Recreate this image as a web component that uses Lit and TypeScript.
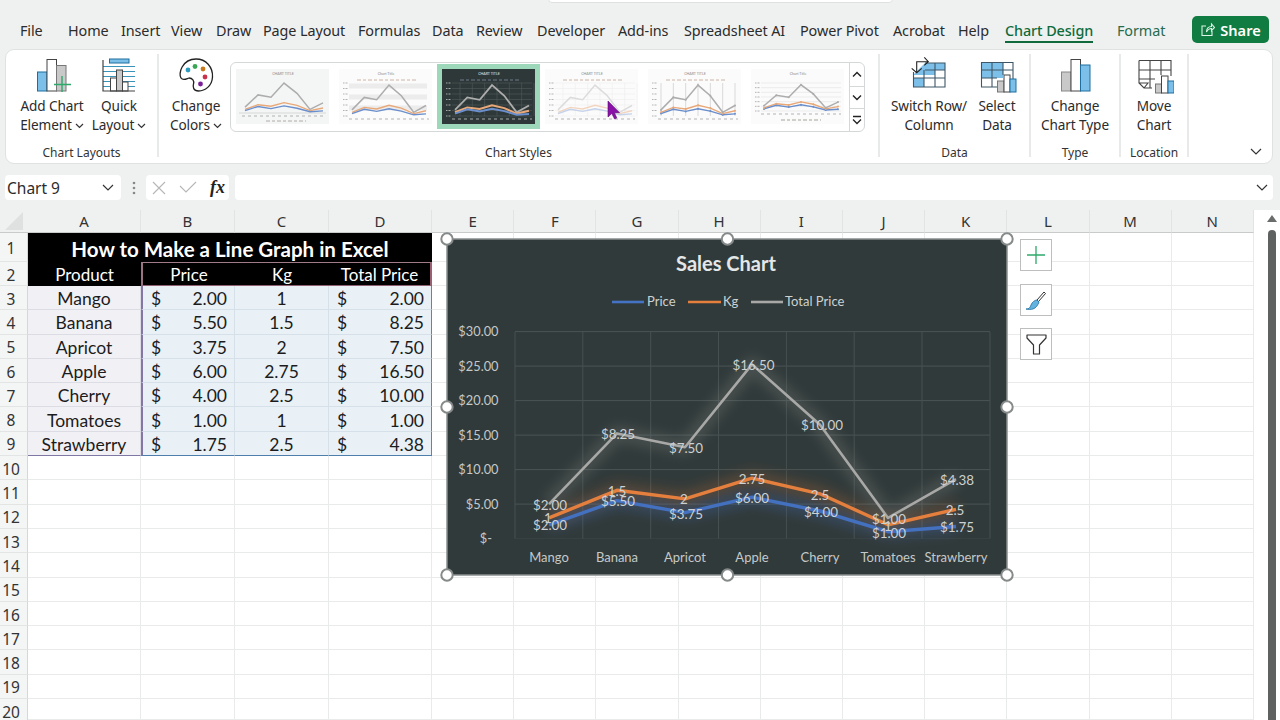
import { LitElement, html, css, svg } from "lit";
import { customElement } from "lit/decorators.js";

const TABS: [string, number][] = [
  ["File", 20], ["Home", 68], ["Insert", 121], ["View", 171], ["Draw", 216], ["Page Layout", 263],
  ["Formulas", 358], ["Data", 432], ["Review", 476], ["Developer", 537], ["Add-ins", 618],
  ["Spreadsheet AI", 684], ["Power Pivot", 800], ["Acrobat", 893], ["Help", 958],
  ["Chart Design", 1005], ["Format", 1117],
];
const COLS = ["A", "B", "C", "D", "E", "F", "G", "H", "I", "J", "K", "L", "M", "N"];
const DATA: [string, string, string, string][] = [
  ["Mango", "2.00", "1", "2.00"], ["Banana", "5.50", "1.5", "8.25"], ["Apricot", "3.75", "2", "7.50"],
  ["Apple", "6.00", "2.75", "16.50"], ["Cherry", "4.00", "2.5", "10.00"], ["Tomatoes", "1.00", "1", "1.00"],
  ["Strawberry", "1.75", "2.5", "4.38"],
];
const CX = [549, 617, 685, 752, 820, 888, 956];
const PRICE = [2, 5.5, 3.75, 6, 4, 1, 1.75];
const KG = [1, 1.5, 2, 2.75, 2.5, 1, 2.5];
const TOTAL = [2, 8.25, 7.5, 16.5, 10, 1, 4.38];
const S1 = PRICE;
const S2 = PRICE.map((v, i) => v + KG[i]);
const S3 = S2.map((v, i) => v + TOTAL[i]);
const Y = (v: number) => 538.6 - v * 6.9;
const pts = (s: number[]) => s.map((v, i) => `${CX[i]},${Y(v).toFixed(1)}`).join(" ");

const chev = (w = 9) => html`<svg class="chev" width=${w} height="6" viewBox="0 0 9 6"><path d="M1 1l3.5 3.5L8 1" fill="none" stroke="#333" stroke-width="1.2"/></svg>`;

function thumb(v: number) {
  const dark = v === 3;
  const x0 = v === 1 ? 9 : 13, x1 = 87;
  const yb = v === 6 ? 42 : v === 1 ? 44 : 47, yt = v === 1 ? 12 : 14;
  const xs = PRICE.map((_, i) => x0 + ((x1 - x0) * i) / 6);
  const yy = (n: number) => yb - (n * (yb - yt)) / 27;
  const line = (s: number[]) => s.map((n, i) => `${xs[i].toFixed(1)},${yy(n).toFixed(1)}`).join(" ");
  const faint = v === 4;
  const gc = faint ? "#dcdcdc" : "#adadad";
  const oc = faint ? "#f3d5bf" : "#e9a878";
  const bc = faint ? "#c4d2ea" : "#6a8fcc";
  const sw = dark ? 2 : 1.4;
  const title = v === 2 || v === 6 ? "Chart Title" : "CHART TITLE";
  const hg = [0, 1, 2, 3, 4, 5, 6].map((i) => yb - (i * (yb - yt)) / 6);
  return html`<svg class="mini" width="93" height="55" viewBox="0 0 93 55">
    <rect width="93" height="55" fill=${dark ? "#2f3838" : v === 1 ? "#f4f5f5" : "#fbfbfb"} />
    <text x="47" y="5.5" font-size="3.6" text-anchor="middle" fill=${dark ? "#e8e8e8" : "#8a8a8a"} font-family="Lato, sans-serif">${title}</text>
    ${v === 2 ? hg.slice(0, 6).map((y, i) => (i % 2 ? svg`<rect x=${x0 - 3} y=${y - 5} width="78" height="5" fill="#ececec"/>` : svg``)) : ""}
    ${v === 3 || v === 6 || v === 4 ? hg.map((y) => svg`<line x1=${x0 - 3} x2="90" y1=${y} y2=${y} stroke=${dark ? "#515a5a" : v === 6 ? "#e2e2e2" : "#efefef"} stroke-width=".6"/>`) : ""}
    ${v === 3 || v === 4 ? xs.map((x) => svg`<line x1=${x + 5} x2=${x + 5} y1=${yt} y2=${yb} stroke=${dark ? "#515a5a" : "#efefef"} stroke-width=".6"/>`) : ""}
    ${v === 5 ? xs.map((x) => svg`<line x1=${x} x2=${x} y1=${yt} y2=${yb} stroke="#d9d9d9" stroke-width="1"/>`) : ""}
    ${v !== 1 ? hg.map((y) => svg`<line x1="4" x2="9" y1=${y} y2=${y} stroke=${dark ? "#b5b5b5" : "#aaa"} stroke-width=".9" stroke-dasharray="1 .5"/>`) : ""}
    ${v !== 6 && v !== 1 ? svg`<line x1="18" x2="78" y1="11" y2="11" stroke=${dark ? "#8fa0c0" : "#b08d75"} stroke-width=".9" stroke-dasharray="4 2 3 2" opacity=".7"/>` : ""}
    ${v === 1 ? svg`<line x1="3" x2="90" y1=${yb} y2=${yb} stroke="#bbb" stroke-width=".5"/><line x1="30" x2="70" y1="52" y2="52" stroke="#a9a5a0" stroke-width=".9" stroke-dasharray="4 2 3 2"/>` : ""}
    ${v === 6 ? svg`<line x1="30" x2="70" y1="51" y2="51" stroke="#9a9a90" stroke-width=".9" stroke-dasharray="4 2 3 2"/>` : ""}
    <line x1=${x0 - 3} x2="90" y1=${yb + 3} y2=${yb + 3} stroke=${dark ? "#b5b5b5" : "#aaa"} stroke-width=".9" stroke-dasharray="3 3"/>
    <polyline points=${line(S3)} fill="none" stroke=${gc} stroke-width=${dark ? 1.8 : 1.5}/>
    <polyline points=${line(S2)} fill="none" stroke=${oc} stroke-width=${sw}/>
    <polyline points=${line(S1)} fill="none" stroke=${bc} stroke-width=${sw}/>
    ${v >= 5 ? [S1, S2, S3].map((s, k) => s.map((n, i) => svg`<circle cx=${xs[i]} cy=${yy(n)} r="1" fill=${[bc, oc, gc][k]}/>`)) : ""}
  </svg>`;
}

@customElement("app-root")
export class AppRoot extends LitElement {
  static styles = css`
    :host { display: block; width: 1280px; height: 720px; overflow: hidden; background: #eff1f1; font-family: "Noto Sans", "Open Sans", sans-serif; color: #2b2b2b; }
    .tabs { display: flex; height: 48px; padding: 0 11px 0 20px; box-sizing: border-box; position: relative; }
    .search { position: absolute; left: 548px; top: -6px; width: 345px; height: 9px; background: #fff; border: 1px solid #dfe1e1; border-radius: 4px; box-sizing: border-box; }
    .tab { margin-top: 20px; font-size: 14.4px; line-height: 21px; white-space: nowrap; letter-spacing: -0.1px; }
    .tab span { display: inline-block; }
    .tab.active span { color: #0f6b3c; font-weight: 500; border-bottom: 2.5px solid #0f6b3c; }
    .tab.fmt span { color: #276b4d; }
    .share { margin: 16px 0 0 auto; width: 77px; height: 27px; background: #107c41; border-radius: 5px; color: #fff; font-size: 14.6px; font-weight: 600; display: flex; align-items: center; justify-content: center; gap: 5px; }
    .ribbon { margin: 1px 7px 0 5px; height: 115px; box-sizing: border-box; background: #fff; border: 1px solid #e0e2e2; border-radius: 9px; display: flex; }
    .group { margin: 4px 0 6px; border-right: 2px solid #e8e9e9; display: flex; flex-direction: column; box-sizing: border-box; flex: none; }
    .btns { flex: 1; display: flex; }
    .glabel { height: 8px; line-height: 8px; text-align: center; font-size: 12px; color: #333; white-space: nowrap; }
    .btn { flex: none; display: flex; flex-direction: column; align-items: center; padding-top: 1px; font-size: 13.6px; line-height: 19px; color: #2b2b2b; white-space: nowrap; letter-spacing: -0.1px; }
    .btn svg.ic { display: block; margin-bottom: 0.5px; }
    .chev { margin-left: 3px; vertical-align: 1px; }
    .gallery { flex: none; margin: 8px 0 0 1px; width: 635px; height: 70px; box-sizing: border-box; border: 1px solid #d5d8d8; border-radius: 6px; display: flex; position: relative; }
    .tw { width: 103px; height: 65px; padding: 5px; margin-top: 1px; box-sizing: border-box; flex: none; }
    .tw.sel { background: #9ed8ba; }
    .mini { display: block; }
    .gscroll { flex: 1; border-left: 1px solid #d5d8d8; display: flex; flex-direction: column; }
    .gs { flex: none; display: flex; align-items: center; justify-content: center; border-bottom: 1px solid #d5d8d8; box-sizing: border-box; }
    .gs:nth-child(1) { height: 24px; } .gs:nth-child(2) { height: 22px; } .gs:nth-child(3) { flex: 1; border-bottom: 0; }
    .cursor { position: absolute; left: 376px; top: 37px; }
    .collapse { margin: auto 10px 8px auto; }
    .fbar { margin: 11px 7px 10px 5px; height: 25px; display: flex; align-items: stretch; }
    .fb { background: #fff; border-radius: 4px; display: flex; align-items: center; box-sizing: border-box; }
    .name { width: 116px; padding: 0 7px 0 2px; justify-content: space-between; font-size: 15.5px; }
    .dots { width: 25px; display: flex; align-items: center; justify-content: center; }
    .fx { width: 83px; padding: 0 4px 0 6px; justify-content: space-between; }
    .fxt { font-family: "Liberation Serif", serif; font-style: italic; font-weight: 700; font-size: 18px; color: #222; }
    .formula { flex: 1; margin-left: 6px; padding-right: 2px; justify-content: flex-end; }
    .sheet { display: flex; height: 510px; background: #fff; position: relative; overflow: hidden; }
    .grid { width: 1256px; flex: none; display: grid; grid-template-columns: 28px 113px 94px 94px 103px repeat(10, 82.2px); grid-template-rows: 23px 29px 24px repeat(17, 24.3px) 21px; font-family: Lato, sans-serif; font-size: 17.5px; color: #1c1c1c; }
    .hd, .rh { background: #eff1f1; font-family: "Noto Sans", sans-serif; font-size: 15px; color: #333; display: flex; align-items: center; justify-content: center; box-sizing: border-box; }
    .hd { border-right: 1px solid #e2e4e4; border-bottom: 1.5px solid #c9cbcb; }
    .rh { background: #f4f5f5; border-bottom: 1px solid #e3e5e5; padding: 2px 5px 0 0; border-right: 1px solid #d6d8d8; font-size: 15.5px; line-height: 16px; }
    .rh.last { padding-top: 5px; border-bottom: 0; }
    .corner { background: #eff1f1; border-bottom: 1.5px solid #c9cbcb; display: flex; align-items: flex-end; justify-content: center; padding-bottom: 1px; box-sizing: border-box; }
    .c { border-right: 1px solid #e9eaea; border-bottom: 1px solid #e9eaea; box-sizing: border-box; display: flex; align-items: center; justify-content: center; white-space: nowrap; padding-top: 2px; }
    .title { grid-column: 2 / 6; background: #000; color: #fff; font-weight: 700; font-size: 20.5px; border: 0; }
    .blk { background: #000; color: #fff; border: 0; font-size: 17px; padding-top: 0; }
    .sel2 { border-top: 1.5px solid #a07c88; border-bottom: 1.5px solid #8e5f70; }
    .sel2.l { border-left: 2px solid #9a7382; }
    .sel2.r { border-right: 2px solid #9a5f72; }
    .ca { background: #f1f0f5; border-color: #dcdde4; }
    .cb { background: #e9f1f6; border-color: #d6e0e8; }
    .cb.l { border-left: 2px solid #8577a5; }
    .cb.r { border-right: 1.5px solid #5c86b0; }
    .bot.ca { border-bottom: 1.5px solid #7f78a5; }
    .bot.cb { border-bottom: 1.5px solid #4e7eac; }
    .money { justify-content: space-between; padding: 2px 7px 0 8px; }
    .vscroll { flex: 1; display: flex; flex-direction: column; align-items: center; padding: 5px 0 0 8px; background: #fff; box-sizing: border-box; }
    .thumb { margin-top: 8px; width: 8px; height: 520px; border-radius: 4px; background: #5f6060; flex: none; }
    .chart { position: absolute; left: 447px; top: 29px; overflow: visible; font-family: Lato, sans-serif; }
    .sidebtns { position: absolute; left: 1020px; top: 29px; display: flex; flex-direction: column; gap: 12.5px; }
    .sb { width: 32px; height: 32px; box-sizing: border-box; background: #fff; border: 1px solid #bdbfbf; display: flex; align-items: center; justify-content: center; }
  `;

  icon(cx: number, body: unknown) {
    return html`<svg class="ic" width="40" height="40" viewBox="${cx - 20} 55 40 40">${body}</svg>`;
  }

  tableRows() {
    const rows: unknown[] = [];
    rows.push(html`<div class="rh">1</div><div class="c title">How to Make a Line Graph in Excel</div>${COLS.slice(4).map(() => html`<div class="c"></div>`)}`);
    rows.push(html`<div class="rh">2</div><div class="c blk">Product</div><div class="c blk sel2 l">Price</div><div class="c blk sel2">Kg</div><div class="c blk sel2 r">Total Price</div>${COLS.slice(4).map(() => html`<div class="c"></div>`)}`);
    DATA.forEach((d, i) => {
      const b = i === DATA.length - 1 ? "bot" : "";
      rows.push(html`<div class="rh">${i + 3}</div>
        <div class="c ca ${b}">${d[0]}</div>
        <div class="c cb l money ${b}"><span>$</span><span>${d[1]}</span></div>
        <div class="c cb ${b}">${d[2]}</div>
        <div class="c cb r money ${b}"><span>$</span><span>${d[3]}</span></div>
        ${COLS.slice(4).map(() => html`<div class="c"></div>`)}`);
    });
    for (let r = 10; r <= 20; r++) {
      rows.push(html`<div class="rh ${r === 20 ? "last" : ""}">${r}</div>${COLS.map(() => html`<div class="c"></div>`)}`);
    }
    return rows;
  }

  chart() {
    const yl = ["$30.00", "$25.00", "$20.00", "$15.00", "$10.00", "$5.00"];
    const vx = [515, 582.8, 650.7, 718.5, 786.4, 854.2, 922, 990];
    const labels: [string, number, number][] = [
      ["$2.00", 550, 505], ["$8.25", 618, 434], ["$7.50", 686, 448], ["$16.50", 753.5, 365], ["$10.00", 822, 425], ["$1.00", 889, 519], ["$4.38", 957, 480],
      ["1", 548, 518], ["1.5", 617, 491], ["2", 684, 499], ["2.75", 752, 479], ["2.5", 820, 495], ["1", 888, 526], ["2.5", 955, 510],
      ["$2.00", 550, 525.5], ["$5.50", 618, 501.5], ["$3.75", 686, 514], ["$6.00", 752, 498], ["$4.00", 821, 512], ["$1.00", 889, 533], ["$1.75", 957, 527],
    ];
    const handles = [[447, 239], [727.5, 239], [1007, 239], [447, 407], [1007, 407], [447, 575], [727.5, 575], [1007, 575]];
    return html`<svg class="chart" width="560" height="336" viewBox="447 239 560 336">
      <defs>
        <filter id="gl" filterUnits="userSpaceOnUse" x="447" y="239" width="560" height="336"><feGaussianBlur stdDeviation="7"/></filter>
      </defs>
      <rect x="447" y="239" width="560" height="336" fill="#313a3a" stroke="#8a8f8f" stroke-width="1.5"/>
      ${[0, 1, 2, 3, 4, 5, 6].map((i) => svg`<line x1="515" x2="990" y1=${Y(i * 5)} y2=${Y(i * 5)} stroke=${i === 0 ? "#3a4343" : "#4b5454"} stroke-width="1"/>`)}
      ${vx.map((x) => svg`<line x1=${x} x2=${x} y1="332" y2="538.6" stroke="#475050" stroke-width="1"/>`)}
      <polyline points=${pts(S3)} fill="none" stroke="#a6a6a6" stroke-width="12" opacity=".25" filter="url(#gl)"/>
      <polyline points=${pts(S2)} fill="none" stroke="#ed7d31" stroke-width="10" opacity=".3" filter="url(#gl)"/>
      <polyline points=${pts(S1)} fill="none" stroke="#4472c4" stroke-width="10" opacity=".4" filter="url(#gl)"/>
      <polyline points=${pts(S3)} fill="none" stroke="#a8a9a7" stroke-width="2.6" stroke-linejoin="round"/>
      <polyline points=${pts(S2)} fill="none" stroke="#e57f3e" stroke-width="3.4" stroke-linejoin="round"/>
      <polyline points=${pts(S1)} fill="none" stroke="#4470c0" stroke-width="3.4" stroke-linejoin="round"/>
      <text x="726" y="271" text-anchor="middle" font-size="20" font-weight="700" fill="#e4e7e7">Sales Chart</text>
      <line x1="612" x2="644" y1="302" y2="302" stroke="#4472c4" stroke-width="2.6"/>
      <text x="647" y="306" font-size="13" fill="#cdd1d1">Price</text>
      <line x1="688" x2="721" y1="302" y2="302" stroke="#e57f3e" stroke-width="2.6"/>
      <text x="723" y="306" font-size="13" fill="#cdd1d1">Kg</text>
      <line x1="751" x2="783" y1="302" y2="302" stroke="#a8a9a7" stroke-width="2.6"/>
      <text x="785" y="306" font-size="13" fill="#cdd1d1">Total Price</text>
      ${yl.map((t, i) => svg`<text x="498.5" y=${Y((6 - i) * 5) + 4.5} text-anchor="end" font-size="12.8" fill="#c4c9c9">${t}</text>`)}
      <text x="492" y="543" text-anchor="end" font-size="12.8" fill="#c4c9c9">$-</text>
      ${DATA.map((d, i) => svg`<text x=${CX[i]} y="561.5" text-anchor="middle" font-size="13" fill="#c4c9c9">${d[0]}</text>`)}
      ${labels.map(([t, x, y]) => svg`<text x=${x} y=${y + 4.5} text-anchor="middle" font-size="13.4" fill="#cdd1d1">${t}</text>`)}
      ${handles.map(([x, y]) => svg`<circle cx=${x} cy=${y} r="5.7" fill="#fff" stroke="#868a8a" stroke-width="2"/>`)}
    </svg>`;
  }

  render() {
    const blue = "#7cc0ea", bs = "#1d6e9e", dk = "#444", gy = "#c9c9c9";
    return html`
      <div class="tabs">
        <div class="search"></div>
        ${TABS.map(([t, x], i) => {
          const nx = i + 1 < TABS.length ? TABS[i + 1][1] : x + 60;
          return html`<div class="tab ${t === "Chart Design" ? "active" : ""} ${t === "Format" ? "fmt" : ""}" style="width:${nx - x}px"><span>${t}</span></div>`;
        })}
        <div class="share">
          <svg width="15" height="15" viewBox="0 0 15 15"><path d="M6 4H2v9.5h10V9M6.5 10c0-3.5 2-5.5 5-5.5V2l3 3.5-3 3.2V6.5C9 6.5 7.5 8 6.5 10z" fill="none" stroke="#dff3e7" stroke-width="1.1"/></svg>
          Share
        </div>
      </div>

      <div class="ribbon">
        <div class="group" style="width:153px">
          <div class="btns">
            <div class="btn" style="width:92px">
              ${this.icon(52, svg`
                <rect x="37.5" y="72" width="9.5" height="19" fill=${blue} stroke=${bs}/>
                <rect x="47" y="59.5" width="9.5" height="31.5" fill="#fff" stroke=${dk}/>
                <rect x="56.5" y="65.5" width="9.5" height="25.5" fill=${gy} stroke="#777"/>
                <path d="M62 76v16M54 84.5h17" fill="none" stroke="#2ea96a" stroke-width="1.4"/>`)}
              <div>Add Chart</div><div>Element${chev()}</div>
            </div>
            <div class="btn" style="width:42px">
              ${this.icon(119, svg`
                <rect x="109.5" y="59" width="19.5" height="4" fill=${blue} stroke=${bs}/>
                <path d="M103 66.5h32M103 71.5h32M103 76.5h32M103 81.5h32M103 86.5h32" stroke="#3a93b8" stroke-width="1"/>
                <rect x="110.5" y="78" width="6" height="13" fill="#fff" stroke=${dk}/>
                <rect x="116.5" y="70" width="6" height="21" fill=${gy} stroke=${dk}/>
                <rect x="122.5" y="82" width="5.5" height="9" fill="#fff" stroke=${dk}/>
                <path d="M103 60v31h32" fill="none" stroke=${dk} stroke-width="1.2"/>`)}
              <div>Quick</div><div>Layout${chev()}</div>
            </div>
          </div>
          <div class="glabel">Chart Layouts</div>
        </div>

        <div class="group" style="width:721px">
          <div class="btns">
            <div class="btn" style="width:66px;margin-left:4px">
              ${this.icon(197, svg`
                <path d="M197 59C207 59 214 67 213.5 77C213 86 206 91 199.5 91C194.5 91 193.5 87 194.5 84C195.5 81 193.5 78 190 78C187 79 184 81 182 78C179 74 183 59 197 59Z" fill="#fff" stroke="#222" stroke-width="1.3"/>
                <circle cx="189" cy="70" r="2.4" fill="#2b9bc0"/><circle cx="196" cy="66.5" r="2.4" fill="#3aa655"/>
                <circle cx="204" cy="69" r="2.4" fill="#c97a1e"/><circle cx="206" cy="77" r="2.4" fill="#c8324a"/>
                <circle cx="201.5" cy="84" r="2.4" fill="#7a1f9a"/>`)}
              <div>Change</div><div>Colors${chev()}</div>
            </div>
            <div class="gallery">
              ${[1, 2, 3, 4, 5, 6].map((v) => html`<div class="tw ${v === 3 ? "sel" : ""}">${thumb(v)}</div>`)}
              <div class="gscroll">
                <div class="gs"><svg width="10" height="7" viewBox="0 0 10 7"><path d="M1 5.5l4-4 4 4" fill="none" stroke="#222" stroke-width="1.4"/></svg></div>
                <div class="gs"><svg width="10" height="7" viewBox="0 0 10 7"><path d="M1 1.5l4 4 4-4" fill="none" stroke="#222" stroke-width="1.4"/></svg></div>
                <div class="gs"><svg width="10" height="10" viewBox="0 0 10 10"><path d="M1 1.5h8M1 4.5l4 4 4-4" fill="none" stroke="#222" stroke-width="1.3"/></svg></div>
              </div>
              <svg class="cursor" width="14" height="20" viewBox="0 0 14 20"><path d="M1 1v16l3.8-3.5L7.6 19l2.2-1-2.4-5.3H12.5z" fill="#8a12a8" stroke="#5a0a70" stroke-width=".6"/></svg>
            </div>
          </div>
          <div class="glabel">Chart Styles</div>
        </div>

        <div class="group" style="width:151px">
          <div class="btns">
            <div class="btn" style="width:98px">
              ${this.icon(929, svg`
                <path d="M913 75L925 63H945V70H935V75Z" fill=${blue}/>
                <rect x="913" y="78" width="11" height="9" fill=${blue}/>
                <path d="M913.5 72v15h31.5V63H925M913 78h32M924 70v17M935 63v24M925 70h20" fill="none" stroke="#3f5666" stroke-width="1.1"/>
                <path d="M916.7 71.7V61.7H928M924.3 57.3l4 4.4-4 3.6M911.7 68.3l5 4.4 5-4.4" fill="none" stroke="#222" stroke-width="1.1"/>`)}
              <div>Switch Row/</div><div>Column</div>
            </div>
            <div class="btn" style="width:38px">
              ${this.icon(997, svg`
                <rect x="981" y="62" width="22" height="16" fill=${blue}/>
                <path d="M981.5 62.5H1013V87H981.5ZM981 70h32M981 78h16M992 62v25M1003 62v13" fill="none" stroke="#3f5666" stroke-width="1.1"/>
                <rect x="997.5" y="81" width="6.5" height="11" fill=${gy} stroke="#777"/>
                <rect x="1004" y="75" width="6" height="17" fill="#fff" stroke=${dk}/>
                <rect x="1010" y="79" width="6" height="13" fill=${blue} stroke=${bs}/>`)}
              <div>Select</div><div>Data</div>
            </div>
          </div>
          <div class="glabel">Data</div>
        </div>

        <div class="group" style="width:90px">
          <div class="btns">
            <div class="btn" style="width:88px">
              ${this.icon(1075, svg`
                <rect x="1061.5" y="72" width="9.5" height="19" fill=${gy} stroke="#888"/>
                <rect x="1071" y="59.5" width="9.5" height="31.5" fill="#fff" stroke=${dk}/>
                <rect x="1080.5" y="65" width="9.5" height="26" fill=${blue} stroke=${bs}/>`)}
              <div>Change</div><div>Chart Type</div>
            </div>
          </div>
          <div class="glabel">Type</div>
        </div>

        <div class="group" style="width:68px">
          <div class="btns">
            <div class="btn" style="width:66px">
              ${this.icon(1154, svg`
                <path d="M1139 60.5h32V76M1139 60.5V83l5 5h8M1139 70h32M1139 79h16M1150 60v28M1161 60v15M1139 83h9l-4 5" fill="none" stroke="#444" stroke-width="1.1"/>
                <rect x="1155.5" y="84" width="6" height="9" fill=${gy} stroke="#777"/>
                <rect x="1161.5" y="76" width="6.5" height="17" fill="#fff" stroke=${dk}/>
                <rect x="1168" y="81" width="6" height="12" fill=${blue} stroke=${bs}/>`)}
              <div>Move</div><div>Chart</div>
            </div>
          </div>
          <div class="glabel">Location</div>
        </div>

        <svg class="collapse" width="12" height="7" viewBox="0 0 12 7"><path d="M1 1l5 5 5-5" fill="none" stroke="#333" stroke-width="1.2"/></svg>
      </div>

      <div class="fbar">
        <div class="fb name"><span>Chart 9</span><svg width="12" height="7" viewBox="0 0 12 7"><path d="M1 1l5 5 5-5" fill="none" stroke="#333" stroke-width="1.2"/></svg></div>
        <div class="dots"><svg width="4" height="14" viewBox="0 0 4 14"><circle cx="2" cy="2" r="1.3" fill="#888"/><circle cx="2" cy="7" r="1.3" fill="#888"/><circle cx="2" cy="12" r="1.3" fill="#888"/></svg></div>
        <div class="fb fx">
          <svg width="14" height="14" viewBox="0 0 14 14"><path d="M1 1l12 12M13 1L1 13" stroke="#b5b7b7" stroke-width="1.1"/></svg>
          <svg width="18" height="13" viewBox="0 0 18 13"><path d="M1 5l6 6L17 1" fill="none" stroke="#b5b7b7" stroke-width="1.1"/></svg>
          <span class="fxt">fx</span>
        </div>
        <div class="fb formula"><svg width="12" height="7" viewBox="0 0 12 7" style="margin-right:3px"><path d="M1 1l5 5 5-5" fill="none" stroke="#333" stroke-width="1.2"/></svg></div>
      </div>

      <div class="sheet">
        <div class="grid">
          <div class="corner"><svg width="20" height="20" viewBox="0 0 20 20"><path d="M19 1V19H1Z" fill="#dfe1e1"/></svg></div>
          ${COLS.map((c) => html`<div class="hd">${c}</div>`)}
          ${this.tableRows()}
        </div>
        <div class="vscroll">
          <svg width="10" height="7" viewBox="0 0 10 7" style="flex:none"><path d="M0 7L5 0l5 7z" fill="#6a6b6b"/></svg>
          <div class="thumb"></div>
        </div>
        ${this.chart()}
        <div class="sidebtns">
          <div class="sb"><svg width="20" height="20" viewBox="0 0 20 20"><path d="M10 1v18M1 10h18" stroke="#2ea96a" stroke-width="1.3"/></svg></div>
          <div class="sb"><svg width="22" height="22" viewBox="0 0 22 22"><path d="M12 11l7-8 1.5 1.5-7 8z" fill="#fff" stroke="#333" stroke-width="1"/><path d="M1 20c3 0 4-1 5-4 1-3 4-5 6-5l2 2c-1 3-3 6-6 7-2 .6-5 .6-7 0z" fill="#63b3e0" stroke="#1d6e9e" stroke-width=".8"/></svg></div>
          <div class="sb"><svg width="22" height="22" viewBox="0 0 22 22"><path d="M2 2h19v3l-6.5 7v9h-6v-9L2 5z" fill="#fff" stroke="#333" stroke-width="1.2" stroke-linejoin="round"/></svg></div>
        </div>
      </div>
    `;
  }
}
